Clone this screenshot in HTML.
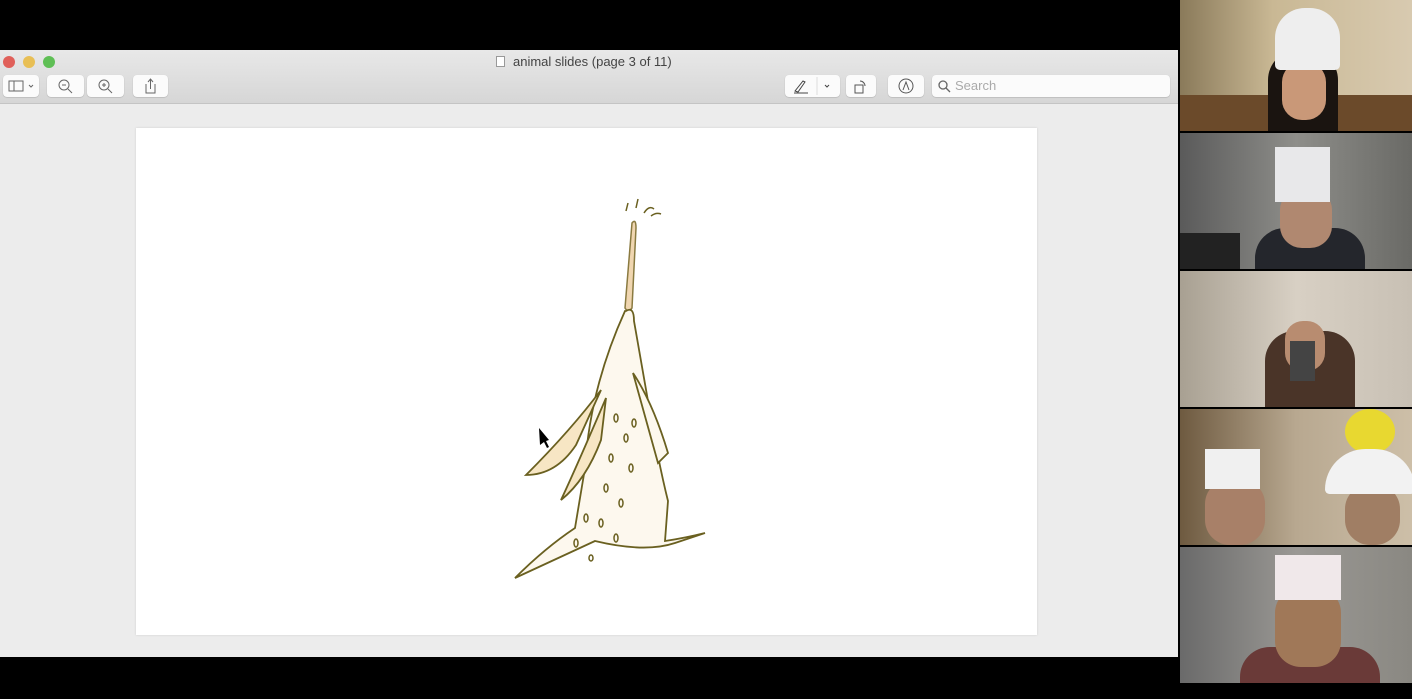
<!DOCTYPE html>
<html><head><style>
*{margin:0;padding:0;box-sizing:border-box}
body{width:1412px;height:699px;background:#000;position:relative;overflow:hidden;font-family:"Liberation Sans",sans-serif}
.win{position:absolute;left:0;top:50px;width:1178px;height:607px;background:#ececec}
.bar{position:absolute;left:0;top:0;width:1178px;height:54px;background:linear-gradient(#e8e8e8,#d6d6d6);border-bottom:1px solid #c4c4c4}
.dot{position:absolute;top:6px;width:12px;height:12px;border-radius:50%}
.title{position:absolute;left:496px;top:4px;font-size:13px;color:#444}
.btn{position:absolute;top:25px;height:22px;background:#fbfbfb;border-radius:4px;box-shadow:0 0.5px 1px #aaa}
.search{position:absolute;left:932px;top:25px;width:238px;height:22px;background:#fbfbfb;border-radius:4px;box-shadow:0 0.5px 1px #aaa;font-size:13px;color:#aaa;padding:3px 0 0 23px}
.page{position:absolute;left:136px;top:78px;width:901px;height:507px;background:#fff;box-shadow:0 0 2px #ccc}
.tile{position:absolute;left:1180px;width:232px;overflow:hidden}
</style></head><body>
<div class="win">
<div class="bar">
<div class="dot" style="left:3px;background:#e0605a"></div>
<div class="dot" style="left:23px;background:#e8bf55"></div>
<div class="dot" style="left:43px;background:#5fbf55"></div>
<div class="title"><span style="display:inline-block;width:9px;height:11px;border:1px solid #999;background:#fff;margin-right:8px;vertical-align:-1px"></span>animal slides (page 3 of 11)</div>
<div class="btn" style="left:3px;width:36px"><svg width="36" height="22"><rect x="6" y="6" width="14" height="10" fill="none" stroke="#666"/><line x1="11" y1="6" x2="11" y2="16" stroke="#666"/><path d="M26 10l2 2 2-2" fill="none" stroke="#666"/></svg></div>
<div class="btn" style="left:47px;width:37px"><svg width="37" height="22"><circle cx="17" cy="10" r="5" fill="none" stroke="#666"/><path d="M15 10h4M21 14l4 4" stroke="#666"/></svg></div>
<div class="btn" style="left:87px;width:37px"><svg width="37" height="22"><circle cx="17" cy="10" r="5" fill="none" stroke="#666"/><path d="M15 10h4M17 8v4M21 14l4 4" stroke="#666"/></svg></div>
<div class="btn" style="left:133px;width:35px"><svg width="35" height="22"><path d="M13 9v9h9V9M17.5 4v10M15 7l2.5-3 2.5 3" fill="none" stroke="#666"/></svg></div>
<div class="btn" style="left:785px;width:55px"><svg width="55" height="22"><path d="M10 16l8-10 2 1-7 10zM9 18h14" stroke="#444" fill="none"/><line x1="32" y1="2" x2="32" y2="20" stroke="#ddd"/><path d="M40 10l2 2 2-2" fill="none" stroke="#444"/></svg></div>
<div class="btn" style="left:846px;width:30px"><svg width="30" height="22"><rect x="9" y="10" width="8" height="8" fill="none" stroke="#555"/><path d="M14 6a5 5 0 0 1 5 5" fill="none" stroke="#555"/></svg></div>
<div class="btn" style="left:888px;width:36px"><svg width="36" height="22"><circle cx="18" cy="11" r="7" fill="none" stroke="#555"/><path d="M15 15l3-8 3 8" fill="none" stroke="#555"/></svg></div>
<div class="search"><svg style="position:absolute;left:6px;top:5px" width="13" height="13"><circle cx="5" cy="5" r="4" fill="none" stroke="#666" stroke-width="1.3"/><path d="M8 8l4 4" stroke="#666" stroke-width="1.3"/></svg>Search</div>
</div>
<div class="page">
<svg width="901" height="507">
<path d="M496 95 q4-5 4 5 l-4 80 q-4 5-7 0z" fill="#f0d6b0" stroke="#8a7a40" stroke-width="1.5"/>
<path d="M490 183 q8-5 8 10 l14 80 q10 60 20 100 l-3 40 q20 -3 40 -8 l-30 10 q-30 10 -80 -2 l-80 37 q30-30 60-50 l10-60 q5-80 40-157z" fill="#fdf8ee" stroke="#6a6020" stroke-width="1.8"/>
<path d="M465 262 q-30 40 -75 85 q30 0 50 -30z" fill="#f7e6c4" stroke="#6a6020" stroke-width="1.8"/>
<path d="M470 270 q-30 70 -45 102 q25 -20 40 -60z" fill="#f7e6c4" stroke="#6a6020" stroke-width="1.8"/>
<path d="M497 245 q20 30 35 80 l-10 10z" fill="#fdf8ee" stroke="#6a6020" stroke-width="1.8"/>
<g fill="none" stroke="#6a6020" stroke-width="1.5">
<ellipse cx="480" cy="290" rx="2" ry="4"/><ellipse cx="490" cy="310" rx="2" ry="4"/><ellipse cx="475" cy="330" rx="2" ry="4"/><ellipse cx="495" cy="340" rx="2" ry="4"/><ellipse cx="470" cy="360" rx="2" ry="4"/><ellipse cx="485" cy="375" rx="2" ry="4"/><ellipse cx="450" cy="390" rx="2" ry="4"/><ellipse cx="465" cy="395" rx="2" ry="4"/><ellipse cx="480" cy="410" rx="2" ry="4"/><ellipse cx="440" cy="415" rx="2" ry="4"/><ellipse cx="498" cy="295" rx="2" ry="4"/><ellipse cx="455" cy="430" rx="2" ry="3"/>
</g>
<path d="M490 83l2-8M500 80l2-9M508 85q5-8 10-4M515 88q5-4 10-2" stroke="#6a6020" fill="none" stroke-width="1.5"/>
<path d="M403 300l10 12-3 1 3 6-2 1-3-6-4 3z" fill="#000"/>
</svg>
</div>
</div>
<div class="tile" style="top:0;height:131px;background:linear-gradient(90deg,#8a7a5a,#c9b894 40%,#d8cab0)"><div style="position:absolute;left:0;top:95px;width:232px;height:40px;background:#6b4a2a"></div><div style="position:absolute;left:88px;top:50px;width:70px;height:85px;background:#1a1410;border-radius:30px 30px 0 0"></div><div style="position:absolute;left:102px;top:62px;width:44px;height:58px;background:#c99878;border-radius:20px"></div><div style="position:absolute;left:95px;top:8px;width:65px;height:62px;background:#eee;border-radius:30px 30px 5px 5px"></div></div>
<div class="tile" style="top:133px;height:136px;background:linear-gradient(90deg,#5a5a5a,#8e8e8a 50%,#6a6a66)"><div style="position:absolute;left:0;top:100px;width:60px;height:36px;background:#222"></div><div style="position:absolute;left:75px;top:95px;width:110px;height:45px;background:#24262c;border-radius:30px 30px 0 0"></div><div style="position:absolute;left:100px;top:55px;width:52px;height:60px;background:#b08870;border-radius:22px"></div><div style="position:absolute;left:95px;top:14px;width:55px;height:55px;background:#e8e8ea"></div></div>
<div class="tile" style="top:271px;height:136px;background:linear-gradient(90deg,#a8a092,#d8d0c4 50%,#c8c0b4)"><div style="position:absolute;left:85px;top:60px;width:90px;height:80px;background:#4a3428;border-radius:30px 30px 0 0"></div><div style="position:absolute;left:105px;top:50px;width:40px;height:50px;background:#b88c70;border-radius:18px"></div><div style="position:absolute;left:110px;top:70px;width:25px;height:40px;background:#444"></div></div>
<div class="tile" style="top:409px;height:136px;background:linear-gradient(90deg,#6e5a40,#b8a890 50%,#cdbfa8)"><div style="position:absolute;left:165px;top:0;width:50px;height:45px;background:#e8d830;border-radius:50%"></div><div style="position:absolute;left:25px;top:70px;width:60px;height:66px;background:#a88068;border-radius:25px"></div><div style="position:absolute;left:25px;top:40px;width:55px;height:40px;background:#f0f0f0"></div><div style="position:absolute;left:165px;top:75px;width:55px;height:61px;background:#a07e64;border-radius:25px"></div><div style="position:absolute;left:145px;top:40px;width:90px;height:45px;background:#f2f2f2;border-radius:45px 45px 5px 5px"></div></div>
<div class="tile" style="top:547px;height:136px;background:linear-gradient(90deg,#6a6a6a,#9a9894 50%,#8a8882)"><div style="position:absolute;left:60px;top:100px;width:140px;height:40px;background:#6a3a38;border-radius:30px 30px 0 0"></div><div style="position:absolute;left:95px;top:40px;width:66px;height:80px;background:#a07858;border-radius:26px"></div><div style="position:absolute;left:95px;top:8px;width:66px;height:45px;background:#f0e8ea"></div></div>
</body></html>
